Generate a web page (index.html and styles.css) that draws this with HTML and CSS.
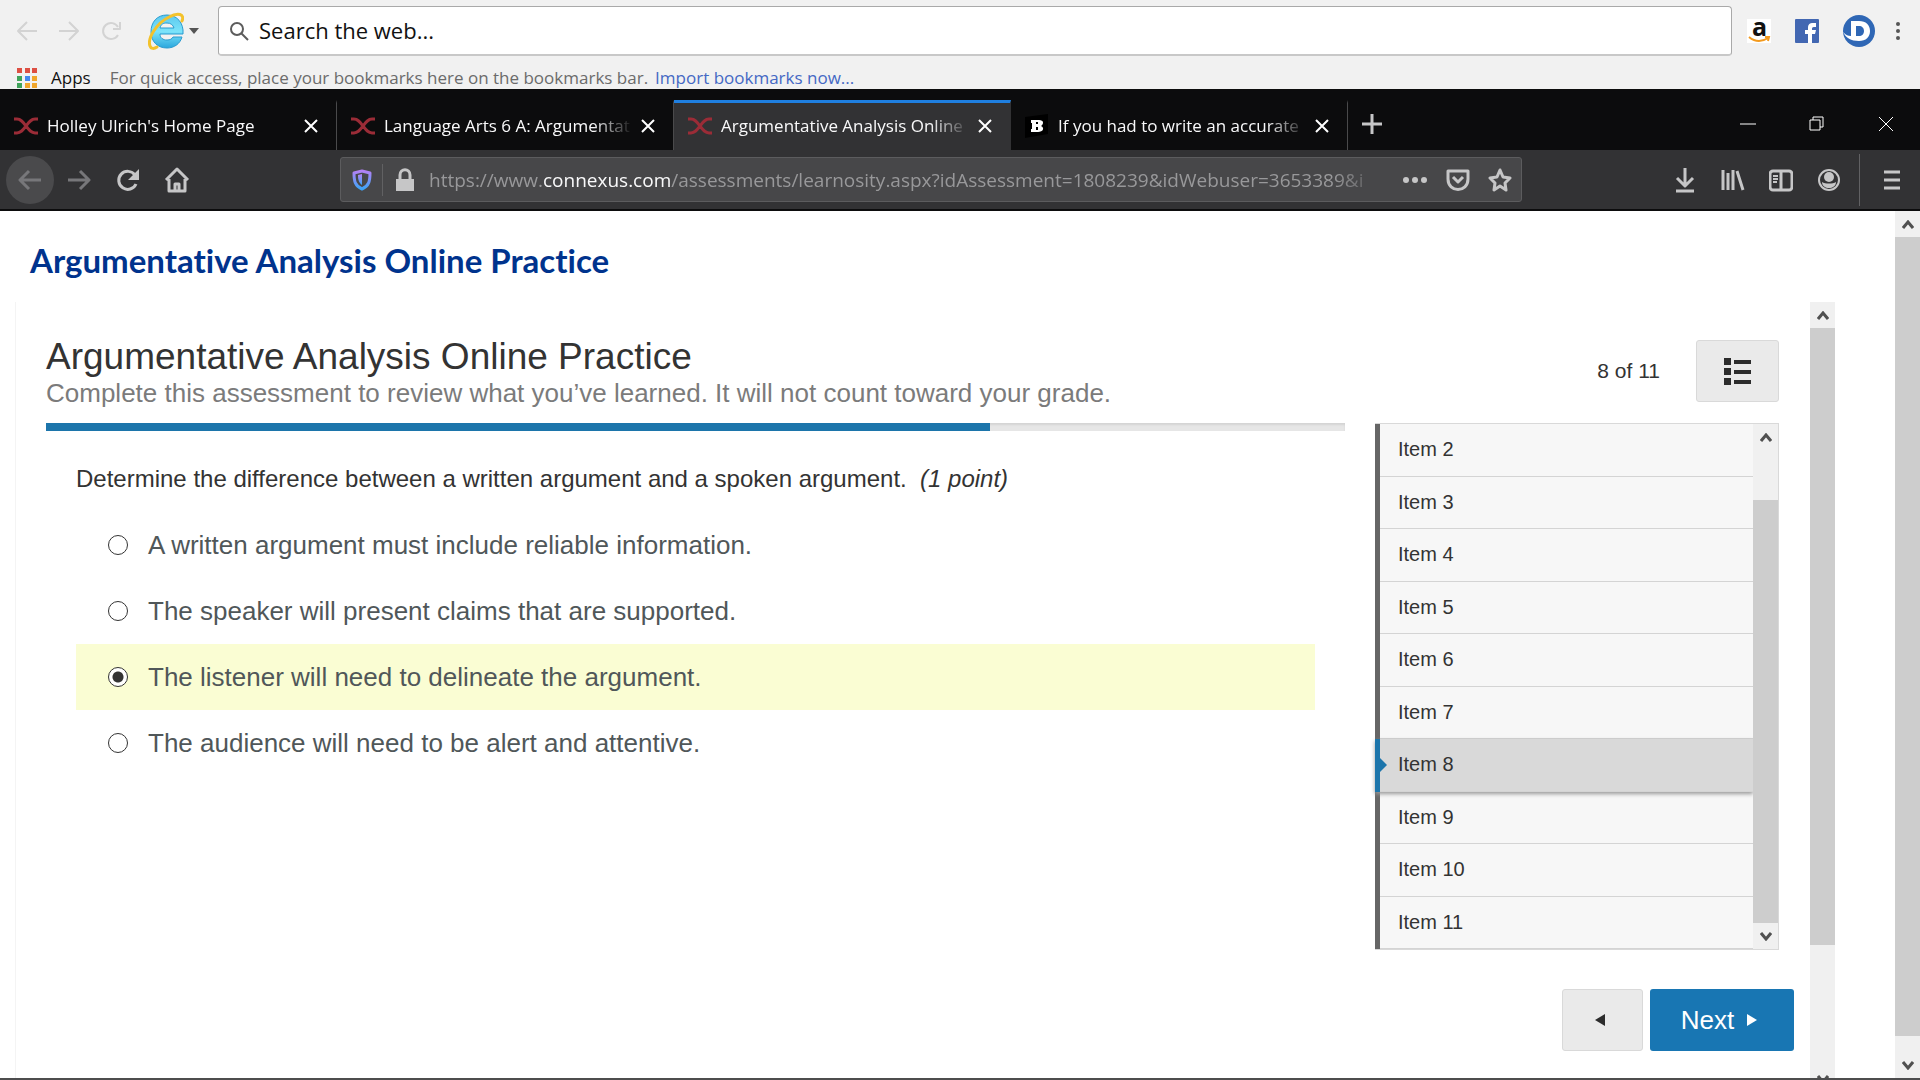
FILE: index.html
```
<!DOCTYPE html>
<html lang="en">
<head>
    <meta charset="UTF-8">
    <meta name="viewport" content="width=device-width, initial-scale=1.0">
    <title>Argumentative Analysis Online Practice</title>
    <link rel="stylesheet" href="styles.css">
</head>
<body>
    <header class="search-bar">
        <div class="search-row">
            <button class="icon-btn faded" aria-label="Back">
                <svg width="22" height="22" viewBox="0 0 22 22"><path d="M21 11H2M11 2L2 11l9 9"/></svg>
            </button>
            <button class="icon-btn faded" aria-label="Forward">
                <svg width="22" height="22" viewBox="0 0 22 22"><path d="M1 11h19M11 2l9 9-9 9"/></svg>
            </button>
            <button class="icon-btn faded" aria-label="Reload">
                <svg width="22" height="22" viewBox="0 0 22 22"><path d="M18 15a8 8 0 1 1 0-8M20 2v7h-7"/></svg>
            </button>
            <button class="icon-btn browser-btn" aria-label="Choose browser">
                <svg width="36" height="38" viewBox="0 0 36 38">
                    <defs>
                        <linearGradient id="ie" x1="0" y1="0" x2="0" y2="1">
                            <stop offset="0" stop-color="#5cc9ee"/>
                            <stop offset=".5" stop-color="#7be3fa"/>
                            <stop offset="1" stop-color="#2ba7dd"/>
                        </linearGradient>
                    </defs>
                    <path fill="url(#ie)" stroke="#2a9bcf" stroke-width="1" d="M19 3C9 3 3 10 3 20s7 16 16 16c7 0 13-4 15-11h-9c-1 2-3 3-6 3-4 0-7-2-7-6h23C36 11 29 3 19 3zm-7 13c1-4 3-5 7-5s6 2 7 5z"/>
                    <path fill="none" stroke="#f3c22c" stroke-width="3" stroke-linecap="round" d="M34 9C37 2 30 0 21 5 9 11-1 26 2 34c1 3 4 3 7 1"/>
                </svg>
                <svg width="10" height="6" viewBox="0 0 10 6"><path class="solid" d="M0 0h10L5 6z"/></svg>
            </button>
            <form class="search-box">
                <svg width="20" height="20" viewBox="0 0 20 20"><circle cx="8" cy="8" r="6"/><path d="M12 12l7 7"/></svg>
                <input type="text" placeholder="Search the web..." aria-label="Search the web">
            </form>
            <div class="shortcuts">
                <a href="#" aria-label="Amazon">
                    <svg class="amazon" width="24" height="24" viewBox="0 0 24 24">
                        <rect width="24" height="24" fill="#fff"/>
                        <text x="5" y="17">a</text>
                        <path fill="none" stroke="#f39a1e" stroke-width="2" d="M2 18c6 5 13 5 19 1M18 18h4l-1 4"/>
                    </svg>
                </a>
                <a href="#" aria-label="Facebook">
                    <svg width="24" height="24" viewBox="0 0 24 24">
                        <rect width="24" height="24" rx="1" fill="#4267b2"/>
                        <path fill="#fff" d="M13 24v-9h-3v-4h3V9c0-4 2-5 5-5h3v4h-2c-2 0-2 1-2 2v1h4l-1 4h-3v9z"/>
                    </svg>
                </a>
                <a href="#" aria-label="Dashboard">
                    <svg width="32" height="32" viewBox="0 0 32 32">
                        <circle cx="16" cy="16" r="16" fill="#2f67b5"/>
                        <path fill="#fff" fill-rule="evenodd" d="M8 6h8c7 0 11 4 11 10s-4 10-11 10C8 26 3 23 0 17c3 3 5 4 8 4zm5 5v10h3c3 0 5-2 5-5s-2-5-5-5z"/>
                    </svg>
                </a>
                <button class="icon-btn" aria-label="More">
                    <svg width="6" height="20" viewBox="0 0 6 20"><circle class="solid" cx="3" cy="3" r="2"/><circle class="solid" cx="3" cy="10" r="2"/><circle class="solid" cx="3" cy="17" r="2"/></svg>
                </button>
            </div>
        </div>
        <div class="bookmarks">
            <svg class="apps" width="20" height="20" viewBox="0 0 20 20">
                <path fill="#dd4f43" d="M0 0h5v5H0zM8 0h5v5H8zM15 0h5v5h-5z"/>
                <path fill="#3fa35a" d="M0 8h5v5H0zM0 15h5v5H0z"/>
                <path fill="#4587ee" d="M8 8h5v5H8z"/>
                <path fill="#f0a62c" d="M15 8h5v5h-5zM8 15h5v5H8zM15 15h5v5h-5z"/>
            </svg>
            <span class="apps-label">Apps</span>
            <span>For quick access, place your bookmarks here on the bookmarks bar.</span>
            <a href="#">Import bookmarks now...</a>
        </div>
    </header>

    <div class="tab-strip">
        <div class="tab">
            <svg class="favicon" width="24" height="18" viewBox="0 0 24 18"><path d="M0 2h3c4 0 6 3 9 7s5 7 9 7h3M24 2h-3c-4 0-6 3-9 7s-5 7-9 7H0"/></svg>
            <span class="tab-title">Holley Ulrich's Home Page</span>
            <button class="icon-btn close" aria-label="Close tab"><svg width="14" height="14" viewBox="0 0 14 14"><path d="M1 1l12 12M13 1L1 13"/></svg></button>
        </div>
        <div class="tab">
            <svg class="favicon" width="24" height="18" viewBox="0 0 24 18"><path d="M0 2h3c4 0 6 3 9 7s5 7 9 7h3M24 2h-3c-4 0-6 3-9 7s-5 7-9 7H0"/></svg>
            <span class="tab-title">Language Arts 6 A: Argumentat</span>
            <button class="icon-btn close" aria-label="Close tab"><svg width="14" height="14" viewBox="0 0 14 14"><path d="M1 1l12 12M13 1L1 13"/></svg></button>
        </div>
        <div class="tab active">
            <svg class="favicon" width="24" height="18" viewBox="0 0 24 18"><path d="M0 2h3c4 0 6 3 9 7s5 7 9 7h3M24 2h-3c-4 0-6 3-9 7s-5 7-9 7H0"/></svg>
            <span class="tab-title">Argumentative Analysis Online</span>
            <button class="icon-btn close" aria-label="Close tab"><svg width="14" height="14" viewBox="0 0 14 14"><path d="M1 1l12 12M13 1L1 13"/></svg></button>
        </div>
        <div class="tab">
            <svg width="24" height="24" viewBox="0 0 24 24"><path fill="#000" d="M0 3l23-3v20L0 24z"/><path fill="#fff" fill-rule="evenodd" d="M6 6h8c5 0 5 4 2 6 4 2 2 6-3 6H6v-3h1V9H6zm5 2v2h2V8zm0 5v3h2v-3z"/></svg>
            <span class="tab-title">If you had to write an accurate</span>
            <button class="icon-btn close" aria-label="Close tab"><svg width="14" height="14" viewBox="0 0 14 14"><path d="M1 1l12 12M13 1L1 13"/></svg></button>
        </div>
        <button class="icon-btn new-tab" aria-label="New tab"><svg width="20" height="20" viewBox="0 0 20 20"><path d="M10 0v20M0 10h20"/></svg></button>
        <div class="window-controls">
            <button class="icon-btn" aria-label="Minimize"><svg width="16" height="16" viewBox="0 0 16 16"><path d="M0 8h16"/></svg></button>
            <button class="icon-btn" aria-label="Restore"><svg width="16" height="16" viewBox="0 0 16 16"><path d="M1 4h10v10H1zM4 4V1h10v10h-3"/></svg></button>
            <button class="icon-btn" aria-label="Close window"><svg width="16" height="16" viewBox="0 0 16 16"><path d="M1 1l14 14M15 1L1 15"/></svg></button>
        </div>
    </div>

    <nav class="toolbar">
        <div class="nav-buttons">
            <button class="icon-btn back" aria-label="Back"><svg width="24" height="24" viewBox="0 0 24 24"><path d="M23 12H2M11 3l-9 9 9 9"/></svg></button>
            <button class="icon-btn forward" aria-label="Forward"><svg width="24" height="24" viewBox="0 0 24 24"><path d="M1 12h21M13 3l9 9-9 9"/></svg></button>
            <button class="icon-btn" aria-label="Reload"><svg width="24" height="24" viewBox="0 0 24 24"><path d="M20 16a9 9 0 1 1-1-9"/><path class="solid" d="M23 1v11H12z"/></svg></button>
            <button class="icon-btn" aria-label="Home"><svg width="26" height="26" viewBox="0 0 26 26"><path d="M2 13L13 2l11 11M5 12v12h16V12M11 24v-7h4v7"/></svg></button>
        </div>
        <div class="url-bar">
            <svg width="20" height="22" viewBox="0 0 20 22">
                <defs>
                    <linearGradient id="shield" x1="0" y1="0" x2="0" y2="1">
                        <stop offset="0" stop-color="#b381f5"/>
                        <stop offset="1" stop-color="#3da4f7"/>
                    </linearGradient>
                </defs>
                <path stroke="url(#shield)" stroke-width="3" d="M10 2l8 2c0 8-1 13-8 16C3 17 2 12 2 4z"/>
                <path fill="url(#shield)" stroke="none" d="M10 5v11c-3-2-4-5-4-10z"/>
            </svg>
            <span class="divider"></span>
            <svg class="lock" width="20" height="24" viewBox="0 0 20 24"><path class="solid" d="M1 11h18v12H1z"/><path d="M5 12V7c0-7 10-7 10 0v5"/></svg>
            <div class="url">https://www.<b>connexus.com</b>/assessments/learnosity.aspx?idAssessment=1808239&amp;idWebuser=3653389&amp;i</div>
            <button class="icon-btn" aria-label="Page actions"><svg width="26" height="8" viewBox="0 0 26 8"><circle class="solid" cx="4" cy="4" r="3"/><circle class="solid" cx="13" cy="4" r="3"/><circle class="solid" cx="22" cy="4" r="3"/></svg></button>
            <button class="icon-btn" aria-label="Save to Pocket"><svg width="24" height="24" viewBox="0 0 24 24"><path d="M2 3h20v8c0 14-20 14-20 0zM7 9l5 5 5-5"/></svg></button>
            <button class="icon-btn" aria-label="Bookmark"><svg width="24" height="24" viewBox="0 0 24 24"><path d="M12 2l3 7 7 1-5 5 1 7-6-4-6 4 1-7-5-5 7-1z"/></svg></button>
        </div>
        <div class="tools">
            <button class="icon-btn" aria-label="Downloads"><svg width="24" height="26" viewBox="0 0 24 26"><path d="M12 1v17M4 11l8 8 8-8M3 24h18"/></svg></button>
            <button class="icon-btn" aria-label="Library"><svg width="24" height="24" viewBox="0 0 24 24"><path d="M2 2v20M7 5v17M12 2v20M16 3l6 19"/></svg></button>
            <button class="icon-btn" aria-label="Sidebar"><svg width="24" height="24" viewBox="0 0 24 24"><rect x="1" y="3" width="22" height="19" rx="3"/><path d="M12 3v19"/><path class="thin" d="M4 8h5M4 11h5M4 14h4"/></svg></button>
            <button class="icon-btn" aria-label="Account"><svg width="24" height="24" viewBox="0 0 24 24"><circle class="thin" cx="12" cy="12" r="10"/><circle class="solid" cx="12" cy="9" r="5"/><path class="solid" d="M5 14c3 2 11 2 14 0 0 8-14 8-14 0z"/></svg></button>
            <span class="divider"></span>
            <button class="icon-btn" aria-label="Menu"><svg width="20" height="20" viewBox="0 0 20 20"><path d="M2 2h16M2 10h16M2 18h16"/></svg></button>
        </div>
    </nav>

    <div class="viewport">
        <main class="page">
            <h1>Argumentative Analysis Online Practice</h1>
            <div class="frame">
                <div class="assessment">
                    <div class="assessment-header">
                        <div>
                            <h2>Argumentative Analysis Online Practice</h2>
                            <p>Complete this assessment to review what you’ve learned. It will not count toward your grade.</p>
                        </div>
                        <span class="count">8 of 11</span>
                        <button class="toc-btn" aria-label="Item list">
                            <svg width="28" height="28" viewBox="0 0 28 28"><path d="M0 1h7v7H0zM0 11h7v7H0zM0 21h7v7H0zM10 3h17v4H10zM10 13h17v4H10zM10 23h17v4H10z"/></svg>
                        </button>
                    </div>
                    <div class="assessment-body">
                        <section class="main-col">
                            <div class="progress"><div class="progress-fill"></div></div>
                            <form class="question">
                                <p>Determine the difference between a written argument and a spoken argument.&nbsp; <em>(1 point)</em></p>
                                <label><input type="radio" name="answer">A written argument must include reliable information.</label>
                                <label><input type="radio" name="answer">The speaker will present claims that are supported.</label>
                                <label><input type="radio" name="answer" checked>The listener will need to delineate the argument.</label>
                                <label><input type="radio" name="answer">The audience will need to be alert and attentive.</label>
                            </form>
                        </section>
                        <aside class="items">
                            <ul>
                                <li><a href="#">Item 2</a></li>
                                <li><a href="#">Item 3</a></li>
                                <li><a href="#">Item 4</a></li>
                                <li><a href="#">Item 5</a></li>
                                <li><a href="#">Item 6</a></li>
                                <li><a href="#">Item 7</a></li>
                                <li class="current"><a href="#">Item 8</a></li>
                                <li><a href="#">Item 9</a></li>
                                <li><a href="#">Item 10</a></li>
                                <li><a href="#">Item 11</a></li>
                            </ul>
                            <div class="scrollbar items-scroll">
                                <button aria-label="Scroll up"><svg width="12" height="9" viewBox="0 0 12 9"><path d="M1 8l5-6 5 6"/></svg></button>
                                <div class="track"><div class="thumb"></div></div>
                                <button aria-label="Scroll down"><svg width="12" height="9" viewBox="0 0 12 9"><path d="M1 1l5 6 5-6"/></svg></button>
                            </div>
                        </aside>
                    </div>
                    <div class="pager">
                        <button class="prev" aria-label="Previous"><svg width="10" height="12" viewBox="0 0 10 12"><path d="M10 0v12L0 6z"/></svg></button>
                        <button class="next">Next <svg width="10" height="12" viewBox="0 0 10 12"><path d="M0 0v12l10-6z"/></svg></button>
                    </div>
                </div>
                <div class="scrollbar frame-scroll">
                    <button aria-label="Scroll up"><svg width="12" height="9" viewBox="0 0 12 9"><path d="M1 8l5-6 5 6"/></svg></button>
                    <div class="track"><div class="thumb"></div></div>
                    <button aria-label="Scroll down"><svg width="12" height="9" viewBox="0 0 12 9"><path d="M1 1l5 6 5-6"/></svg></button>
                </div>
            </div>
        </main>
        <div class="scrollbar page-scroll">
            <button aria-label="Scroll up"><svg width="12" height="9" viewBox="0 0 12 9"><path d="M1 8l5-6 5 6"/></svg></button>
            <div class="track"><div class="thumb"></div></div>
            <button aria-label="Scroll down"><svg width="12" height="9" viewBox="0 0 12 9"><path d="M1 1l5 6 5-6"/></svg></button>
        </div>
    </div>
    <footer class="taskbar"></footer>
</body>
</html>
```
FILE: styles.css
```
* {
    box-sizing: border-box;
}

body {
    margin: 0;
    height: 100vh;
    display: flex;
    flex-direction: column;
    overflow: hidden;
    background: #fff;
    font-family: "Open Sans", "Noto Sans", sans-serif;
}

button {
    font: inherit;
    border: 0;
    padding: 0;
    cursor: pointer;
}

svg {
    display: block;
    flex: none;
}

.icon-btn {
    display: flex;
    align-items: center;
    justify-content: center;
    background: none;
}

.icon-btn svg,
.url-bar svg {
    fill: none;
    stroke: #c6c6c7;
    stroke-width: 3;
    stroke-linejoin: round;
}

.icon-btn svg .solid,
.url-bar svg .solid {
    fill: #c6c6c7;
    stroke: none;
}

.icon-btn svg .thin {
    stroke-width: 2;
}

/* search bar */
.search-bar {
    height: 89px;
    flex: none;
    background: #f1f1f1;
    overflow: hidden;
}

.search-row {
    display: flex;
    align-items: center;
    height: 50px;
    margin-top: 6px;
    padding: 0 19px 0 16px;
}

.search-row .faded {
    margin-right: 20px;
}

.icon-btn.faded svg {
    stroke: #d3d3d3;
    stroke-width: 2;
}

.search-row .browser-btn {
    gap: 5px;
    margin: 0 19px 0 6px;
}

.browser-btn svg .solid,
.shortcuts .icon-btn svg .solid {
    fill: #555;
}

.search-box {
    flex: 1;
    display: flex;
    align-items: center;
    height: 50px;
    padding-left: 10px;
    background: #fff;
    border: 1px solid #a9a9a9;
    border-bottom: 2px solid #c8c8c8;
    border-radius: 4px;
}

.search-box svg {
    fill: none;
    stroke: #5c5c5c;
    stroke-width: 2;
}

.search-box input {
    flex: 1;
    border: 0;
    padding: 0 10px 2px;
    background: none;
    font: 22px "Open Sans", sans-serif;
}

.search-box input::placeholder {
    color: #111;
}

.shortcuts {
    display: flex;
    align-items: center;
    gap: 24px;
    margin-left: 15px;
}

.shortcuts .icon-btn {
    margin-left: -4px;
}

.amazon {
    overflow: visible;
    font: bold 25px "Open Sans", sans-serif;
    fill: #111;
}

.bookmarks {
    display: flex;
    align-items: center;
    gap: 12px;
    height: 24px;
    margin-top: 10px;
    padding-left: 17px;
    font-size: 17px;
    line-height: 24px;
    color: #6b6b6b;
}

.bookmarks .apps-label {
    margin: 0 7px 0 2px;
    color: #111;
}

.bookmarks a {
    margin-left: -5px;
    color: #4468c4;
    text-decoration: none;
}

/* tabs */
.tab-strip {
    display: flex;
    height: 61px;
    flex: none;
    padding-top: 11px;
    background: #0c0c0d;
}

.tab {
    display: flex;
    align-items: center;
    flex: 0 1 337px;
    min-width: 0;
    padding: 0 18px 2px 14px;
    border-right: 1px solid #4a4a4b;
    border-top: 3px solid transparent;
    color: #f9f9fa;
}

.tab.active {
    background: #323234;
    border-top-color: #1f7fe0;
    border-right-color: transparent;
}

.favicon {
    fill: none;
    stroke: #9b2c37;
    stroke-width: 3;
}

.tab-title {
    flex: 1;
    margin: 0 8px 0 9px;
    font-size: 17px;
    overflow: hidden;
    white-space: nowrap;
    mask-image: linear-gradient(to right, #000 calc(100% - 40px), transparent);
}

.icon-btn.close svg {
    stroke: #fff;
    stroke-width: 2;
}

.new-tab {
    margin: 0 auto 3px 14px;
}

.window-controls {
    display: flex;
    gap: 53px;
    margin: 0 26px 3px 0;
}

.window-controls .icon-btn svg {
    stroke: #fff;
    stroke-width: 1;
}

/* toolbar */
.toolbar {
    display: flex;
    align-items: center;
    height: 61px;
    flex: none;
    padding: 0 18px 0 6px;
    background: #323234;
    border-bottom: 2px solid #0c0c0d;
}

.nav-buttons {
    display: flex;
    gap: 1px;
    flex: 0 0 334px;
}

.nav-buttons .icon-btn {
    width: 48px;
    height: 48px;
}

.nav-buttons .back {
    border-radius: 50%;
    background: #4a4a4c;
}

.nav-buttons .back svg,
.nav-buttons .forward svg {
    stroke: #77777a;
}

.url-bar {
    flex: 1;
    min-width: 0;
    display: flex;
    align-items: center;
    gap: 18px;
    height: 45px;
    padding: 0 9px 0 11px;
    background: #474749;
    border: 1px solid #5c5c5e;
    border-radius: 3px;
}

.divider {
    width: 1px;
    height: 32px;
    background: #616163;
}

.url-bar .divider {
    margin: 0 -6px 0 -8px;
}

.url {
    flex: 1;
    margin-left: -4px;
    font-size: 19px;
    overflow: hidden;
    white-space: nowrap;
    color: #98989a;
    mask-image: linear-gradient(to right, #000 calc(100% - 50px), transparent);
}

.url b {
    font-weight: normal;
    color: #f9f9fa;
}

.tools {
    display: flex;
    align-items: center;
    gap: 24px;
    margin-left: 151px;
}

.tools .divider {
    height: 52px;
    margin: 0 -2px 0 -6px;
}

/* page */
.viewport {
    flex: 1;
    min-height: 0;
    display: flex;
}

.page {
    flex: 1;
    display: flex;
    flex-direction: column;
    padding: 29px 60px 0 15px;
}

h1 {
    margin: 0 0 22px 15px;
    font: bold 33px/40px Lato, sans-serif;
    font-variant-ligatures: none;
    color: #00338d;
}

.frame {
    flex: 1;
    min-height: 0;
    display: flex;
    border-left: 1px solid #f4f4f4;
    font-family: "Liberation Sans", Arial, sans-serif;
    color: #333;
}

.assessment {
    flex: 1;
    padding: 33px 16px 0 30px;
}

.assessment-header {
    display: flex;
    align-items: center;
    padding-right: 15px;
    margin-bottom: 16px;
}

h2 {
    margin: 0;
    font-size: 37px;
    font-weight: normal;
    line-height: 44px;
}

.assessment-header p {
    margin: 0;
    font-size: 26px;
    line-height: 28px;
    color: #7b7b7b;
}

.count {
    margin: 0 36px 0 auto;
    font-size: 21px;
}

.toc-btn {
    display: flex;
    align-items: center;
    justify-content: center;
    width: 83px;
    height: 62px;
    background: #eaeaea;
    border: 1px solid #d9d9d9;
    border-radius: 3px;
}

.toc-btn svg {
    fill: #2c2c2c;
}

.assessment-body {
    display: flex;
    gap: 30px;
    padding-right: 15px;
}

.main-col {
    flex: 1;
}

.progress {
    height: 8px;
    background: #e6e6e6;
    box-shadow: inset 0 2px 2px #d4d4d4;
}

.progress-fill {
    width: 72.7%;
    height: 100%;
    background: #1c75ab;
}

.question {
    padding: 32px 30px 0;
}

.question p {
    margin: 0 0 17px;
    font-size: 24px;
    line-height: 32px;
}

.question label {
    display: flex;
    align-items: center;
    height: 66px;
    padding-left: 32px;
    font-size: 26px;
    color: #505759;
}

.question label:has(:checked) {
    background: #fafdd3;
}

.question input {
    appearance: none;
    width: 20px;
    height: 20px;
    margin: 0 20px 0 0;
    border: 1px solid #333;
    border-radius: 50%;
    background: #fff;
}

.question input:checked {
    background: radial-gradient(circle, #333 5px, #fff 6px);
}

/* item list */
.items {
    width: 404px;
    display: flex;
    border: 1px solid #d9d9d9;
    border-left: 0;
}

.items ul {
    flex: 1;
    margin: 0;
    padding: 0;
    list-style: none;
    display: grid;
    grid-auto-rows: 1fr;
    height: 525px;
}

.items li {
    border-left: 5px solid #666;
    background: #f7f7f7;
}

.items a {
    display: flex;
    align-items: center;
    height: 100%;
    padding-left: 18px;
    border-bottom: 1px solid #d4d4d4;
    font-size: 20px;
    color: #333;
    text-decoration: none;
}

.items .current {
    position: relative;
    background: #d9d9d9;
    border-left-color: #1c75ab;
    box-shadow: 0 2px 4px #999;
}

.items .current::before {
    content: "";
    position: absolute;
    left: 0;
    top: calc(50% - 7px);
    border: 7px solid transparent;
    border-left-color: #1c75ab;
    border-right: 0;
}

.items-scroll {
    z-index: 1;
}

.pager {
    display: flex;
    justify-content: flex-end;
    gap: 7px;
    margin-top: 39px;
}

.pager button {
    display: flex;
    align-items: center;
    justify-content: center;
    gap: 13px;
    height: 62px;
    padding-right: 6px;
    border-radius: 3px;
    font-size: 26px;
}

.prev {
    width: 81px;
    background: #eaeaea;
    border: 1px solid #d9d9d9;
    fill: #2c2c2c;
}

.next {
    width: 144px;
    background: #1876b3;
    color: #fff;
    fill: #fff;
}

/* scrollbars */
.scrollbar {
    display: flex;
    flex-direction: column;
    width: 25px;
    flex: none;
    background: #f0f0f0;
}

.scrollbar button {
    display: flex;
    align-items: center;
    justify-content: center;
    height: 26px;
    background: none;
}

.scrollbar svg {
    fill: none;
    stroke: #505050;
    stroke-width: 3;
}

.track {
    flex: 1;
    display: flex;
    flex-direction: column;
}

.thumb {
    background: #cdcdcd;
}

.page-scroll .thumb {
    height: 98%;
}

.frame-scroll {
    height: 790px;
}

.frame-scroll .thumb {
    height: 617px;
}

.items-scroll .track {
    justify-content: flex-end;
}

.items-scroll .thumb {
    height: 423px;
}

.taskbar {
    height: 2px;
    flex: none;
    background: #4d4d4e;
}
```
